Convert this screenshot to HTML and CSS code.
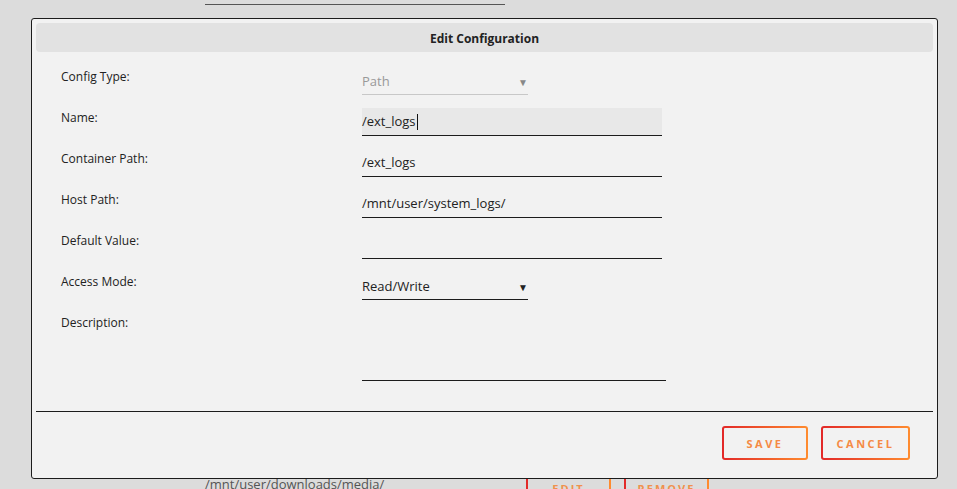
FILE: index.html
```html
<!DOCTYPE html>
<html lang="en">
<head>
    <meta charset="UTF-8">
    <title>Edit Configuration</title>
    <link rel="stylesheet" href="styles.css">
</head>
<body>

<!-- Page behind the dialog -->
<div class="bg-list">
    <div class="bg-line"></div>
    <div class="bg-row">
        <span class="bg-path">/mnt/user/downloads/media/</span>
        <span class="bg-btn">EDIT</span>
        <span class="bg-btn">REMOVE</span>
    </div>
</div>

<!-- Edit dialog -->
<div class="modal">
    <div class="modal-title">Edit Configuration</div>

    <div class="form">
        <label class="form-label">Config Type:</label>
        <div class="select select-disabled">
            <span>Path</span>
            <span class="arrow">&#9660;</span>
        </div>

        <label class="form-label">Name:</label>
        <div class="field field-focus"><span>/ext_logs</span><span class="caret"></span></div>

        <label class="form-label">Container Path:</label>
        <div class="field">/ext_logs</div>

        <label class="form-label">Host Path:</label>
        <div class="field">/mnt/user/system_logs/</div>

        <label class="form-label">Default Value:</label>
        <div class="field"></div>

        <label class="form-label">Access Mode:</label>
        <div class="select">
            <span>Read/Write</span>
            <span class="arrow">&#9660;</span>
        </div>

        <label class="form-label">Description:</label>
        <div class="field textarea"></div>
    </div>

    <div class="divider"></div>

    <div class="actions">
        <button class="btn btn-save">SAVE</button>
        <button class="btn btn-cancel">CANCEL</button>
    </div>
</div>

</body>
</html>
```

FILE: styles.css
```css
html, body {
    margin: 0;
    padding: 0;
    height: 100%;
    overflow: hidden;
}

body {
    font-family: "Open Sans", "Noto Sans", Arial, sans-serif;
    background: #dcdcdc;
    color: #222;
}

/* Background page */
.bg-list {
    padding-left: 205px;
}

.bg-line {
    width: 300px;
    height: 4px;
    border-bottom: 1px solid #555;
}

.bg-row {
    display: flex;
    align-items: flex-start;
    margin-top: 470px;
    height: 40px;
}

.bg-path {
    width: 321px;
    font-size: 13px;
    color: #555;
    line-height: 18px;
}

.bg-btn {
    box-sizing: border-box;
    width: 85px;
    height: 34px;
    margin-right: 13px;
    margin-top: -4px;
    padding-top: 8px;
    text-align: center;
    font-size: 11px;
    font-weight: bold;
    letter-spacing: 2px;
    color: #f0914e;
    border: 2px solid transparent;
    border-radius: 3px;
    background: linear-gradient(#dcdcdc, #dcdcdc) padding-box,
                linear-gradient(90deg, #e22828, #ff8c2f) border-box;
}

/* Dialog */
.modal {
    position: fixed;
    left: 31px;
    top: 18px;
    width: 897px;
    height: 451px;
    padding: 4px;
    background: #f2f2f2;
    border: 1px solid #1c1c1c;
    border-radius: 3px;
}

.modal-title {
    height: 29px;
    line-height: 32px;
    text-align: center;
    font-size: 12px;
    font-weight: bold;
    background: #e2e2e2;
    border-radius: 4px;
}

.form {
    display: grid;
    grid-template-columns: 301px 1fr;
    row-gap: 13px;
    padding: 15px 0 0 25px;
}

.form-label {
    font-size: 12px;
    line-height: 20px;
    color: #222;
}

.field {
    box-sizing: border-box;
    width: 300px;
    height: 28px;
    line-height: 27px;
    font-size: 13px;
    color: #222;
    border-bottom: 1px solid #1c1c1c;
    display: flex;
    align-items: center;
}

.field-focus {
    background: #e8e8e8;
}

.caret {
    width: 1px;
    height: 16px;
    background: #111;
    margin-left: 1px;
}

.textarea {
    width: 304px;
    height: 68px;
}

.select {
    box-sizing: border-box;
    width: 166px;
    height: 28px;
    display: flex;
    align-items: center;
    justify-content: space-between;
    font-size: 13px;
    color: #222;
    border-bottom: 1px solid #1c1c1c;
    padding-top: 1px;
}

.select .arrow {
    font-size: 10px;
    margin-right: 0;
    margin-top: 1px;
}

.select-disabled {
    color: #999;
    border-bottom-color: #c8c8c8;
}

.select-disabled .arrow {
    color: #888;
}

.divider {
    margin-top: 30px;
    border-top: 1px solid #1c1c1c;
}

.actions {
    display: flex;
    justify-content: flex-end;
    gap: 13px;
    padding: 14px 23px 0 0;
}

.btn {
    height: 34px;
    padding: 0;
    font-family: inherit;
    font-size: 11px;
    font-weight: bold;
    letter-spacing: 2.5px;
    color: #f58a45;
    border: 2px solid transparent;
    border-radius: 3px;
    background: linear-gradient(#f2f2f2, #f2f2f2) padding-box,
                linear-gradient(90deg, #e22828, #ff8c2f) border-box;
    cursor: pointer;
}

.btn-save {
    width: 86px;
}

.btn-cancel {
    width: 89px;
}
```
